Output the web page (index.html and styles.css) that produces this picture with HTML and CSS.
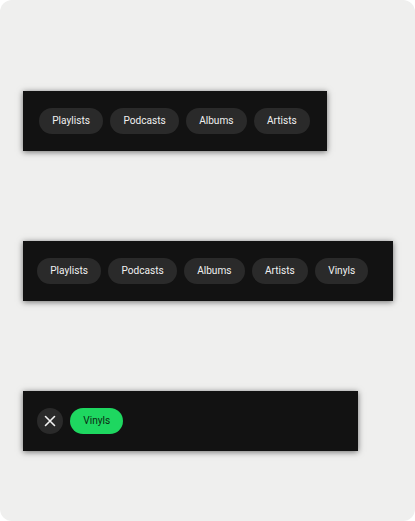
FILE: index.html
```html
<!DOCTYPE html>
<html>
<head>
<meta charset="utf-8">
<link rel="stylesheet" href="styles.css">
</head>
<body>
<div class="card">
  <div class="bar bar-a">
    <span class="chip">Playlists</span>
    <span class="chip">Podcasts</span>
    <span class="chip">Albums</span>
    <span class="chip">Artists</span>
  </div>
  <div class="bar bar-b">
    <span class="chip">Playlists</span>
    <span class="chip">Podcasts</span>
    <span class="chip">Albums</span>
    <span class="chip">Artists</span>
    <span class="chip">Vinyls</span>
  </div>
  <div class="bar bar-c">
    <span class="close">
      <svg width="12" height="12" viewBox="0 0 12 12"><path d="M1.5 1.5 L10.5 10.5 M10.5 1.5 L1.5 10.5" stroke="#f2f2f2" stroke-width="1.6" stroke-linecap="round"/></svg>
    </span>
    <span class="chip chip-on">Vinyls</span>
  </div>
</div>
</body>
</html>
```
FILE: styles.css
```css
html, body {
  margin: 0;
  padding: 0;
  background: #ffffff;
}
.card {
  width: 415px;
  height: 521px;
  box-sizing: border-box;
  background: #efefee;
  border-radius: 12px;
  padding: 91px 0 0 23px;
  display: flex;
  flex-direction: column;
  gap: 90px;
  font-family: Roboto, "Noto Sans", sans-serif;
}
.bar {
  height: 60px;
  box-sizing: border-box;
  background: #121212;
  box-shadow: 0 1px 6px rgba(0, 0, 0, 0.55);
  display: flex;
  align-items: center;
  gap: 7px;
}
.bar-a { width: 304px; padding-left: 16px; }
.bar-b { width: 370px; padding-left: 14px; }
.bar-c { width: 335px; padding-left: 14px; }
.chip {
  height: 26px;
  padding: 0 13.25px;
  border-radius: 13px;
  background: #2a2a2a;
  color: #f0f0f0;
  font-size: 10.1px;
  line-height: 26px;
  white-space: nowrap;
}
.chip-on {
  background: #1ed760;
  color: #0b2a14;
}
.close {
  width: 26px;
  height: 26px;
  border-radius: 50%;
  background: #2a2a2a;
  display: flex;
  align-items: center;
  justify-content: center;
}
```
